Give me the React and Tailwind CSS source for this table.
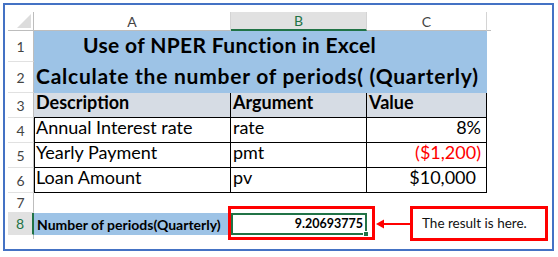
import React from "react";

const font = { fontFamily: "Lato, 'Liberation Sans', sans-serif" };

// row header cell (the numbers down the left side)
function RowHead({ n, active }) {
  return (
    <div
      className={
        "flex items-center justify-center border-b border-[#e1e1e1] text-[14px] " +
        (active
          ? "bg-[#e1e1e1] text-[#217346] border-r-2 border-r-[#217346]"
          : "bg-white text-[#444] border-r border-r-[#bdbdbd]")
      }
    >
      {n}
    </div>
  );
}

function ColHead({ label, active }) {
  return (
    <div
      className={
        "flex items-center justify-center text-[14px] border-r border-[#d4d4d4] " +
        (active
          ? "bg-[#e1e1e1] text-[#217346] border-b-2 border-b-[#217346]"
          : "bg-white text-[#444] border-b border-b-[#bdbdbd]")
      }
    >
      {label}
    </div>
  );
}

const rows = [
  { n: 4, desc: "Annual Interest rate", arg: "rate", val: "8%", red: false, pr: "pr-[5px]" },
  { n: 5, desc: "Yearly Payment", arg: "pmt", val: "($1,200)", red: true, pr: "pr-[5px]" },
  { n: 6, desc: "Loan Amount", arg: "pv", val: "$10,000", red: false, pr: "pr-[10px]" },
];

export default function App() {
  return (
    <div className="w-[558px] h-[257px] bg-white overflow-hidden pt-[3px] pl-[3px]" style={font}>
      <div className="relative w-[551px] h-[248px] border-2 border-[#4472c4] pl-[3px] pt-[7px]">
        <div className="grid grid-cols-[26px_197px_136px_120px_4px] grid-rows-[19px_31px_31px_25px_25px_25px_25px_20px_22px_4px] text-black">
          {/* column headers */}
          <div className="relative bg-white border-r border-b border-[#bdbdbd]">
            <div className="absolute right-[2px] bottom-[2px] w-0 h-0 border-l-[14px] border-l-transparent border-b-[14px] border-b-[#dcdcdc]" />
          </div>
          <ColHead label="A" />
          <ColHead label="B" active />
          <ColHead label="C" />
          <div className="bg-white border-b border-[#bdbdbd]" />

          {/* title rows */}
          <RowHead n={1} />
          <div className="col-span-3 bg-[#9dc3e6] flex items-end pl-[49px] pb-[2px] text-[21px] font-bold tracking-[0.35px] whitespace-nowrap">
            Use of NPER Function in Excel
          </div>
          <div />
          <RowHead n={2} />
          <div className="col-span-3 bg-[#9dc3e6] flex items-end pl-[2px] pb-[2px] text-[21px] font-bold tracking-[0.75px] whitespace-nowrap">
            Calculate the number of periods( (Quarterly)
          </div>
          <div />

          {/* table header */}
          <RowHead n={3} />
          <div className="bg-[#d6dce4] border-r border-b border-black flex items-end pl-[2px] pb-[1px] text-[18px] font-bold">Description</div>
          <div className="bg-[#d6dce4] border-r border-b border-black flex items-end pl-[2px] pb-[1px] text-[18px] font-bold">Argument</div>
          <div className="bg-[#d6dce4] border-r border-b border-black flex items-end pl-[2px] pb-[1px] text-[18px] font-bold">Value</div>
          <div />

          {rows.map((r) => (
            <React.Fragment key={r.n}>
              <RowHead n={r.n} />
              <div className="border-l border-r border-b border-black flex items-end pl-[1px] pb-[1px] text-[18px]">{r.desc}</div>
              <div className="border-r border-b border-black flex items-end pl-[2px] pb-[1px] text-[18px]">{r.arg}</div>
              <div className={"border-r border-b border-black flex items-end justify-end pb-[1px] text-[18px] " + r.pr + (r.red ? " text-[#ff0000]" : "")}>
                {r.val}
              </div>
              <div />
            </React.Fragment>
          ))}

          <RowHead n={7} />
          <div className="col-span-4" />

          <RowHead n={8} active />
          <div className="bg-[#9dc3e6] flex items-center pl-[3px] text-[14px] font-bold whitespace-nowrap">
            Number of periods(Quarterly)
          </div>
          <div className="relative border-2 border-[#217346] flex items-center justify-end pr-[2px] text-[12.5px] font-bold">
            9.20693775
            <div className="absolute -right-[4px] -bottom-[4px] w-[6px] h-[6px] bg-[#217346] border border-white" />
          </div>
          <div className="col-span-2" />

          <div className="border-r border-[#bdbdbd]" />
          <div className="col-span-4" />
        </div>

        {/* annotation: red outline round the result cell */}
        <div className="absolute left-[223px] top-[201px] w-[147px] h-[34px] border-[3px] border-[#ff0000]" />

        {/* arrow */}
        <svg className="absolute left-[371px] top-[213px]" width="36" height="12" viewBox="0 0 36 12">
          <line x1="6" y1="6" x2="36" y2="6" stroke="#ff0000" strokeWidth="2" />
          <polygon points="0,6 8,1.5 8,10.5" fill="#ff0000" />
        </svg>

        {/* callout */}
        <div className="absolute left-[405px] top-[201px] w-[138px] h-[35px] border-[3px] border-[#ff0000] flex items-center pl-[9px] text-[13.5px] text-[#111]">
          The result is here.
        </div>
      </div>
    </div>
  );
}
